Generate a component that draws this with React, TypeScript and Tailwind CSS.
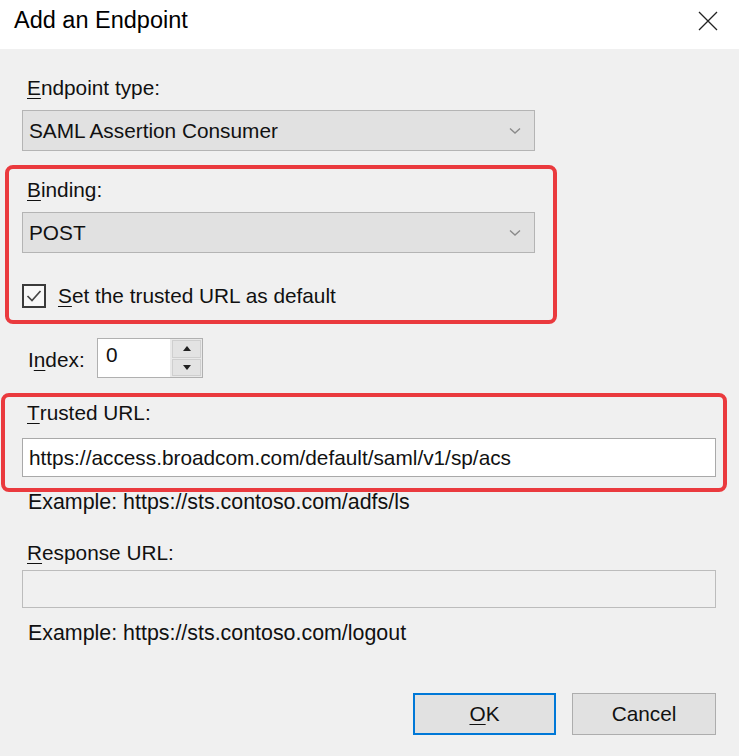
import React from 'react'

function Chevron() {
  return (
    <svg width="12" height="8" viewBox="0 0 12 8" className="shrink-0">
      <polyline points="1,1.5 6,6 11,1.5" fill="none" stroke="#8a8a8a" strokeWidth="1.4" />
    </svg>
  )
}

function Label({ k, rest, className = '' }: { k: string; rest: string; className?: string }) {
  return (
    <div className={`flex items-center h-[24px] ml-[5px] ${className}`}>
      <span className="underline underline-offset-[3px] decoration-1">{k}</span>
      <span>{rest}</span>
    </div>
  )
}

function Select({ value }: { value: string }) {
  return (
    <div className="flex items-center justify-between w-[513px] h-[41px] bg-[#e1e1e1] border border-[#b4b4b4] pl-[6px] pr-[13px]">
      <span>{value}</span>
      <Chevron />
    </div>
  )
}

export default function App() {
  return (
    <div
      className="w-[739px] h-[756px] bg-[#f0f0f0] text-[#111] text-[20.8px] overflow-hidden"
      style={{ fontFamily: '"Liberation Sans", Arial, sans-serif' }}
    >
      {/* title bar */}
      <div className="h-[49px] bg-white flex items-center justify-between pl-[14px] pr-[21px] pb-[8px]">
        <span className="text-[23.5px] text-black">Add an Endpoint</span>
        <svg width="20" height="20" viewBox="0 0 20 20">
          <path d="M1 1 L19 19 M19 1 L1 19" stroke="#222" strokeWidth="1.3" />
        </svg>
      </div>

      <div className="pl-[22px]">
        <Label k="E" rest="ndpoint type:" className="mt-[27px]" />
        <div className="mt-[10px]">
          <Select value="SAML Assertion Consumer" />
        </div>
      </div>

      {/* highlighted binding block */}
      <div className="ml-[5px] mt-[14px] w-[552px] h-[159px] border-4 border-[#ea3a3e] rounded-[8px] pl-[13px] pt-[9px]">
        <Label k="B" rest="inding:" />
        <div className="mt-[10px]">
          <Select value="POST" />
        </div>
        <div className="mt-[31px] flex items-center h-[24px]">
          <div className="w-[24px] h-[24px] border-2 border-[#3a3a3a] bg-[#f7f7f7] flex items-center justify-center">
            <svg width="16" height="14" viewBox="0 0 16 14">
              <polyline points="1.5,7 6,11.5 14.5,2" fill="none" stroke="#444" strokeWidth="1.7" />
            </svg>
          </div>
          <span className="ml-[12px]">
            <span className="underline underline-offset-[3px] decoration-1">S</span>et the trusted URL as default
          </span>
        </div>
      </div>

      {/* index spinner */}
      <div className="pl-[22px] mt-[14px] flex items-center h-[40px]">
        <div className="ml-[6px] w-[69px] pt-[4px]">
          I<span className="underline underline-offset-[3px] decoration-1">n</span>dex:
        </div>
        <div className="flex h-[40px] border border-[#b0b0b0] bg-[#e9e9e9]">
          <div className="w-[72px] bg-white flex items-center pl-[8px] pb-[6px]">0</div>
          <div className="w-[32px] flex flex-col gap-[1px] p-[1px] pl-[2px]">
            <div className="flex-1 bg-[#e3e3e3] border border-[#cfcfcf] flex items-center justify-center">
              <svg width="8" height="5" viewBox="0 0 8 5"><polygon points="0,5 4,0 8,5" fill="#222" /></svg>
            </div>
            <div className="flex-1 bg-[#e3e3e3] border border-[#cfcfcf] flex items-center justify-center">
              <svg width="8" height="5" viewBox="0 0 8 5"><polygon points="0,0 8,0 4,5" fill="#222" /></svg>
            </div>
          </div>
        </div>
      </div>

      {/* highlighted trusted url block */}
      <div className="ml-[1px] mt-[15px] w-[726px] h-[99px] border-4 border-[#ea3a3e] rounded-[8px] pl-[17px] pt-[4px]">
        <Label k="T" rest="rusted URL:" />
        <div className="mt-[13px] w-[694px] h-[39px] bg-white border border-[#a9a9a9] flex items-center pl-[6px]">
          https://access.broadcom.com/default/saml/v1/sp/acs
        </div>
      </div>

      <div className="pl-[22px]">
        <div className="flex items-center h-[24px] ml-[6px] mt-[-2px] text-[21.4px]">Example: https://sts.contoso.com/adfs/ls</div>
        <Label k="R" rest="esponse URL:" className="mt-[27px]" />
        <div className="mt-[5px] w-[694px] h-[38px] bg-[#f0f0f0] border border-[#bcbcbc]" />
        <div className="flex items-center h-[24px] ml-[6px] mt-[13px] text-[21.4px]">Example: https://sts.contoso.com/logout</div>
      </div>

      {/* buttons */}
      <div className="mt-[48px] flex justify-end gap-[16px] pr-[23px]">
        <button className="w-[143px] h-[42px] bg-[#e1e1e1] border-2 border-[#0078d7] flex items-center justify-center">
          <span className="underline underline-offset-[3px] decoration-1">O</span>K
        </button>
        <button className="w-[144px] h-[42px] bg-[#e1e1e1] border border-[#adadad] flex items-center justify-center">
          Cancel
        </button>
      </div>
    </div>
  )
}
